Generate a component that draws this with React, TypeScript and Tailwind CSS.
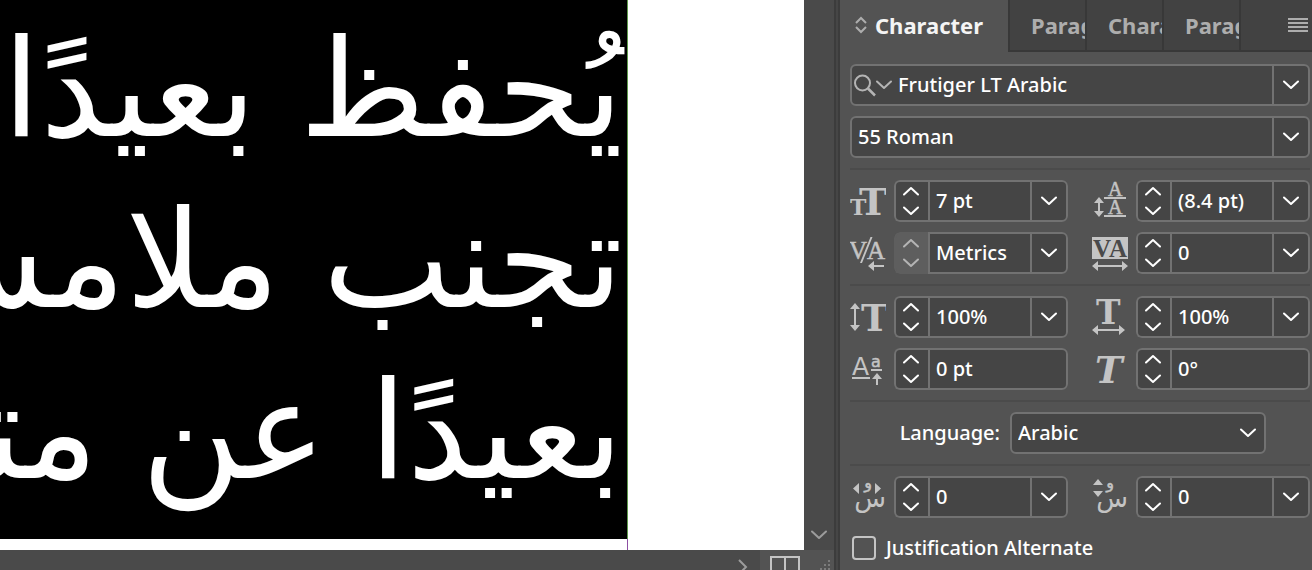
import type { ReactNode } from 'react'
import clsx from 'clsx'

const lines = ['يُحفظ بعيدًا', 'تجنب ملامسة', 'بعيدًا عن متناول']

const serif = { fontFamily: '"DejaVu Serif", serif', fontWeight: 700 }
const thinSerif = { fontFamily: '"Liberation Serif", serif', fontWeight: 400 }
const boldSerif = { fontFamily: '"Liberation Serif", serif', fontWeight: 700 }
const sans = { fontFamily: '"DejaVu Sans", sans-serif', fontWeight: 400 }

function Chevron({ up = false }: { up?: boolean }) {
  return (
    <svg viewBox="0 0 16 10" className="h-2.5 w-4 shrink-0" fill="none" stroke="currentColor" strokeWidth="2">
      <path d={up ? 'M1 8.5 8 2l7 6.5' : 'M1 1.5 8 8l7-6.5'} strokeLinecap="round" strokeLinejoin="round" />
    </svg>
  )
}

function Glyph({ children }: { children: ReactNode }) {
  return (
    <svg viewBox="0 0 36 42" className="h-[42px] w-9 shrink-0 text-[#c4c4c4]" fill="currentColor" aria-hidden="true">
      {children}
    </svg>
  )
}

const icons = {
  size: (
    <Glyph>
      <text x="0" y="35" fontSize="22" style={serif}>T</text>
      <text x="9" y="35" fontSize="38" style={serif}>T</text>
    </Glyph>
  ),
  leading: (
    <Glyph>
      <text x="16" y="16" fontSize="20" style={thinSerif} stroke="currentColor" strokeWidth="0.5">A</text>
      <text x="16" y="34" fontSize="20" style={thinSerif} stroke="currentColor" strokeWidth="0.5">A</text>
      <path d="M12 17h22v2H12zM12 35h22v2H12zM7 17l5 6H8v8h4l-5 6-5-6h4v-8H2z" />
    </Glyph>
  ),
  kerning: (
    <Glyph>
      <text x="-1" y="27" fontSize="25" style={thinSerif} stroke="currentColor" strokeWidth="0.5">V</text>
      <text x="17" y="27" fontSize="25" style={thinSerif} stroke="currentColor" strokeWidth="0.5">A</text>
      <path d="M20.500 5h2L12 31h-2zM24 29v4h10v2H24v4l-6-5z" />
    </Glyph>
  ),
  tracking: (
    <Glyph>
      <path d="M0 5h36v22H0zM6 29v4h24v-4l6 5-6 5v-4H6v4l-6-5z" />
      <text x="1" y="25" fontSize="25" fill="#4a4a4a" style={boldSerif}>V</text>
      <text x="17" y="25" fontSize="25" fill="#4a4a4a" style={boldSerif}>A</text>
    </Glyph>
  ),
  vscale: (
    <Glyph>
      <path d="M5 7l5 6H6v16h4l-5 6-5-6h4V13H0z" />
      <text x="11" y="35" fontSize="37" style={serif}>T</text>
    </Glyph>
  ),
  hscale: (
    <Glyph>
      <text x="4" y="28" fontSize="33" style={serif}>T</text>
      <path d="M6 29v4h21v-4l6 5-6 5v-4H6v4l-6-5z" />
    </Glyph>
  ),
  baseline: (
    <Glyph>
      <text x="2" y="27" fontSize="25" style={sans}>A</text>
      <text x="21" y="19" fontSize="16" style={sans} stroke="currentColor" strokeWidth="0.5">a</text>
      <path d="M2 29h18v2H2zM21 21h11v2H21zM27 25l5 6h-4v6h-2v-6h-4z" />
    </Glyph>
  ),
  skew: (
    <Glyph>
      <text x="3" y="35" fontSize="37" style={{ ...serif, fontStyle: 'italic' }}>T</text>
    </Glyph>
  ),
  markX: (
    <Glyph>
      <text x="36" y="31" fontSize="26" textAnchor="end" style={sans}>س</text>
      <text x="22" y="12" fontSize="16" textAnchor="end" style={sans} stroke="currentColor" strokeWidth="0.5">و</text>
      <path d="M9 7v11l-6-5.500zM25 7v11l6-5.500z" />
    </Glyph>
  ),
  markY: (
    <Glyph>
      <text x="36" y="31" fontSize="26" textAnchor="end" style={sans}>س</text>
      <text x="22" y="12" fontSize="16" textAnchor="end" style={sans} stroke="currentColor" strokeWidth="0.5">و</text>
      <path d="M6 3l5 6H1zM1 15h10l-5 6z" />
    </Glyph>
  ),
}

type StepperProps = {
  icon: ReactNode
  label: string
  value: string
  menu?: boolean
  disabled?: boolean
}

function Stepper({ icon, label, value, menu = true, disabled = false }: StepperProps) {
  return (
    <div className="flex items-center gap-2">
      {icon}
      <div className="flex h-[42px] min-w-0 flex-1 rounded-md bg-[#454545]">
        <div
          className={clsx(
            'flex w-[34px] shrink-0 flex-col items-center justify-center gap-2.5 rounded-l-md border-2 border-r-0 pr-0.5',
            disabled ? 'border-[#5e5e5e] bg-[#5e5e5e] text-[#b4b4b4]' : 'border-[#727272] text-white'
          )}
        >
          <button aria-label={`${label} up`} disabled={disabled}>
            <Chevron up />
          </button>
          <button aria-label={`${label} down`} disabled={disabled}>
            <Chevron />
          </button>
        </div>
        <div className="flex min-w-0 flex-1 rounded-r-md border-2 border-[#727272]">
          <input aria-label={label} defaultValue={value} className="w-full min-w-0 flex-1 bg-transparent px-1.5 outline-none" />
          {menu && (
            <button aria-label={`${label} menu`} className="flex w-9 shrink-0 items-center justify-center border-l-2 border-[#727272]">
              <Chevron />
            </button>
          )}
        </div>
      </div>
    </div>
  )
}

function Combo({ label, value, search = false }: { label: string; value: string; search?: boolean }) {
  return (
    <div className="flex h-[42px] rounded-md border-2 border-[#727272] bg-[#454545]">
      {search && (
        <button aria-label="Search fonts" className="flex shrink-0 items-center pl-0.5 text-[#b4b4b4]">
          <svg viewBox="0 0 22 24" className="h-6 w-[22px]" fill="none" stroke="currentColor" strokeWidth="2">
            <circle cx="8.500" cy="10" r="7.500" />
            <path d="M14 15.500l7 7" strokeWidth="2.500" />
          </svg>
          <Chevron />
        </button>
      )}
      <input aria-label={label} defaultValue={value} className="w-full min-w-0 flex-1 bg-transparent px-1.5 outline-none" />
      <button aria-label={`${label} menu`} className="flex w-9 shrink-0 items-center justify-center border-l-2 border-[#727272]">
        <Chevron />
      </button>
    </div>
  )
}

function Divider() {
  return <hr className="h-0.5 border-0 bg-[#4b4b4b]" />
}

function DocumentView() {
  return (
    <div className="flex min-w-0 flex-1 flex-col">
      <div className="flex min-h-0 flex-1">
        <div className="flex min-w-0 flex-1 flex-col bg-white">
          <div
            dir="rtl"
            lang="ar"
            className="min-h-0 flex-1 overflow-hidden border-r border-[#5f9a4c] bg-black pt-1 pr-1 font-['DejaVu_Sans',sans-serif] text-[136px] leading-[171px] font-normal whitespace-nowrap text-white"
          >
            {lines.map((line) => (
              <p key={line}>{line}</p>
            ))}
          </div>
          <div className="h-[11px] border-r border-[#8d4fa3]" />
        </div>
        <div className="w-44 shrink-0 bg-white" />
        <div className="flex w-[30px] shrink-0 flex-col items-center justify-end bg-[#4a4a4a] pb-2.5 text-[#9c9c9c]">
          <button aria-label="Scroll down">
            <Chevron />
          </button>
        </div>
      </div>
      <div className="flex h-5 shrink-0 justify-end overflow-hidden bg-[#4a4a4a] text-[#9c9c9c]">
        <button aria-label="Scroll right" className="mr-3 w-2.5">
          <svg viewBox="0 0 10 20" className="h-5 w-2.5" fill="none" stroke="currentColor" strokeWidth="2">
            <path d="M1 10l7 7-7 7" />
          </svg>
        </button>
        <div className="flex w-[74px] gap-5 bg-[#535353] pl-2.5">
          <svg viewBox="0 0 30 20" className="h-5 w-[30px]" fill="none" stroke="#c4c4c4" strokeWidth="2">
            <path d="M1 20V7h28v13M15 7v13" />
          </svg>
          <svg viewBox="0 0 12 20" className="h-5 w-3" fill="#7c7c7c">
            <path d="M8 10h2v2H8zM4 14h2v2H4zM8 14h2v2H8zM0 18h2v2H0zM4 18h2v2H4zM8 18h2v2H8z" />
          </svg>
        </div>
      </div>
    </div>
  )
}

function Tabs() {
  return (
    <div role="tablist" className="flex h-[52px] text-[22px] font-bold text-[#adadad]">
      <button role="tab" aria-selected="true" className="flex w-[168px] shrink-0 items-center gap-2 pb-0.5 pl-[15px] text-[#f4f4f4]">
        <svg viewBox="0 0 12 18" className="h-[18px] w-3 shrink-0" fill="none" stroke="#adadad" strokeWidth="2">
          <path d="M1 7l5-5 5 5M1 11l5 5 5-5" />
        </svg>
        Character
      </button>
      <div className="flex min-w-0 flex-1 border-b-2 border-l-2 border-[#383838] bg-[#424242]">
        {['Paragraph', 'Character Styles', 'Paragraph Styles'].map((name) => (
          <button
            key={name}
            role="tab"
            aria-selected="false"
            className="w-[77px] shrink-0 overflow-hidden border-r-2 border-[#383838] pl-[21px] text-left whitespace-nowrap"
          >
            {name}
          </button>
        ))}
        <button aria-label="Panel menu" className="ml-auto pr-1">
          <svg viewBox="0 0 20 14" className="h-3.5 w-5" fill="currentColor">
            <path d="M0 0h20v2H0zM0 4h20v2H0zM0 8h20v2H0zM0 12h20v2H0z" />
          </svg>
        </button>
      </div>
    </div>
  )
}

export default function App() {
  return (
    <div className="flex h-screen overflow-hidden bg-[#535353] font-['Noto_Sans',sans-serif] text-xl font-medium text-white">
      <DocumentView />
      <div className="w-1.5 shrink-0 border-x-2 border-[#3c3c3c] bg-[#464646]" />
      <aside className="w-[472px] shrink-0">
        <Tabs />
        <div className="flex flex-col gap-2.5 pt-3 pr-0.5 pl-2.5">
          <Combo label="Font family" value="Frutiger LT Arabic" search />
          <Combo label="Font style" value="55 Roman" />
          <Divider />
          <div className="grid grid-cols-2 gap-x-6 gap-y-2.5">
            <Stepper icon={icons.size} label="Font size" value="7 pt" />
            <Stepper icon={icons.leading} label="Leading" value="(8.4 pt)" />
            <Stepper icon={icons.kerning} label="Kerning" value="Metrics" disabled />
            <Stepper icon={icons.tracking} label="Tracking" value="0" />
          </div>
          <Divider />
          <div className="grid grid-cols-2 gap-x-6 gap-y-2.5">
            <Stepper icon={icons.vscale} label="Vertical scale" value="100%" />
            <Stepper icon={icons.hscale} label="Horizontal scale" value="100%" />
            <Stepper icon={icons.baseline} label="Baseline shift" value="0 pt" menu={false} />
            <Stepper icon={icons.skew} label="Skew" value="0°" menu={false} />
          </div>
          <Divider />
          <div className="flex items-center justify-end gap-2.5 pr-11">
            <label htmlFor="language">Language:</label>
            <div className="relative">
              <select
                id="language"
                className="h-[42px] w-64 appearance-none rounded-md border-2 border-[#727272] bg-[#454545] px-1.5 outline-none"
              >
                <option>Arabic</option>
              </select>
              <span className="pointer-events-none absolute inset-y-0 right-2.5 flex items-center">
                <Chevron />
              </span>
            </div>
          </div>
          <Divider />
          <div className="grid grid-cols-2 gap-x-6">
            <Stepper icon={icons.markX} label="Diacritic horizontal" value="0" />
            <Stepper icon={icons.markY} label="Diacritic vertical" value="0" />
          </div>
          <label className="flex items-center gap-2.5 pt-1.5 pl-0.5">
            <input type="checkbox" className="size-6 appearance-none rounded-sm border-2 border-[#c4c4c4]" />
            Justification Alternate
          </label>
        </div>
      </aside>
    </div>
  )
}
